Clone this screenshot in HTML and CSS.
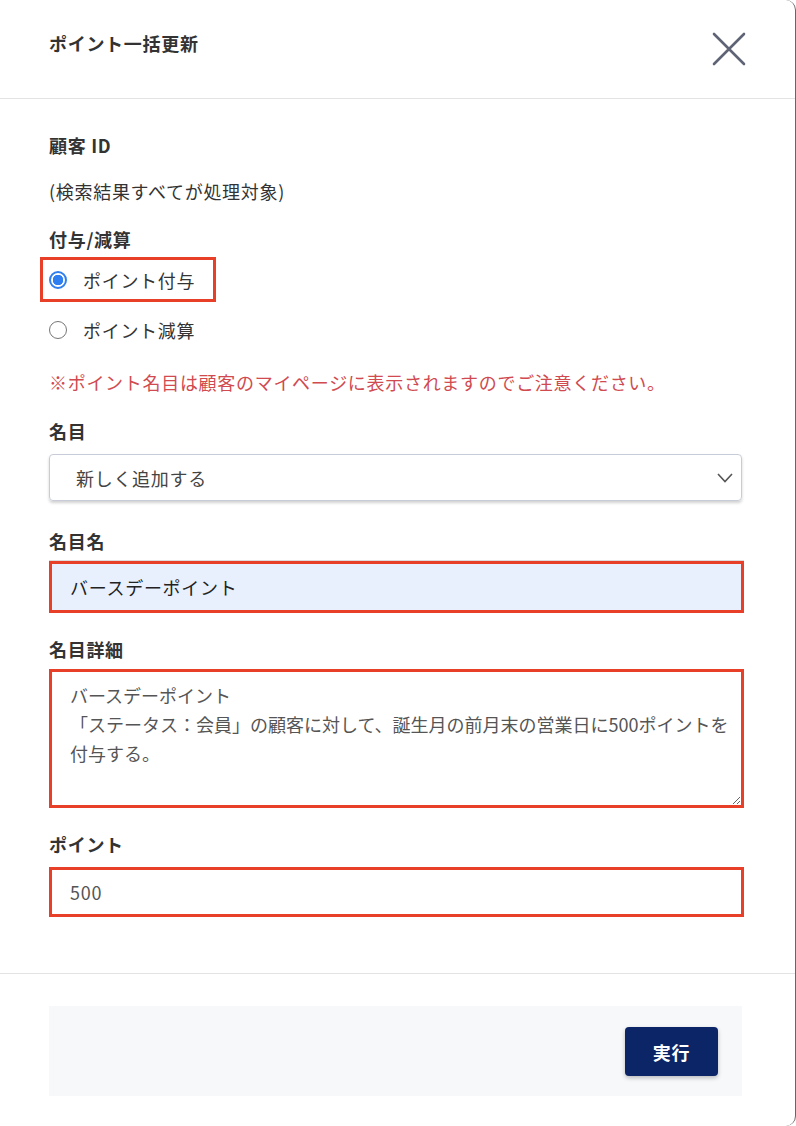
FILE: index.html
```html
<!DOCTYPE html>
<html lang="ja">
<head>
    <meta charset="UTF-8">
    <meta name="viewport" content="width=device-width, initial-scale=1.0">
    <title>ポイント一括更新</title>
    <link rel="stylesheet" href="styles.css">
</head>
<body>
    <div class="modal">
        <div class="modal-header">
            <h1 class="modal-title">ポイント一括更新</h1>
            <button class="close" type="button" aria-label="閉じる">
                <svg width="34" height="34" viewBox="0 0 34 34">
                    <path d="M2 2 L32 32 M32 2 L2 32" stroke="#5f6376" stroke-width="2.6" stroke-linecap="round" fill="none"/>
                </svg>
            </button>
        </div>

        <div class="modal-body">
            <div class="label">顧客 ID</div>
            <div class="text">(検索結果すべてが処理対象)</div>

            <div class="label label-radio">付与/減算</div>
            <label class="radio-row marked">
                <input type="radio" name="kind" checked>
                <span>ポイント付与</span>
            </label>
            <label class="radio-row second">
                <input type="radio" name="kind">
                <span>ポイント減算</span>
            </label>

            <p class="notice">※ポイント名目は顧客のマイページに表示されますのでご注意ください。</p>

            <div class="label">名目</div>
            <div class="select">
                <span>新しく追加する</span>
                <svg width="16" height="10" viewBox="0 0 16 10">
                    <path d="M1 1 L8 8.5 L15 1" stroke="#555" stroke-width="1.6" fill="none"/>
                </svg>
            </div>

            <div class="label label-name">名目名</div>
            <input class="field field-name marked" type="text" value="バースデーポイント">

            <div class="label label-detail">名目詳細</div>
            <textarea class="field field-detail marked">バースデーポイント
「ステータス：会員」の顧客に対して、誕生月の前月末の営業日に500ポイントを付与する。</textarea>

            <div class="label label-point">ポイント</div>
            <input class="field field-point marked" type="text" value="500">
        </div>

        <div class="modal-footer">
            <div class="footer-box">
                <button class="submit" type="button">実行</button>
            </div>
        </div>
    </div>
</body>
</html>
```

FILE: styles.css
```css
*{
    margin: 0;
    padding: 0;
    box-sizing: border-box;
}
body{
    font-family: "Noto Sans CJK JP", "Noto Sans", sans-serif;
    font-size: 18px;
    letter-spacing: 0.7px;
    color: #333;
    background-color: white;
}
.modal{
    width: 796px;
    min-height: 1126px;
    border-right: 1px solid #666;
    border-radius: 0 10px 10px 0;
    background-color: white;
}
.modal-header{
    height: 99px;
    padding: 28px 50px 0 49px;
    display: flex;
    justify-content: space-between;
    align-items: flex-start;
    border-bottom: 1px solid #e3e3e3;
}
.modal-title{
    font-size: 18px;
    font-weight: 700;
    line-height: 30px;
    color: #333;
}
.close{
    background: none;
    border: none;
    margin-top: 4px;
    margin-right: -1px;
    width: 34px;
    height: 34px;
}
.modal-body{
    padding: 31px 51px 56px 49px;
}
.label{
    font-weight: 700;
    line-height: 30px;
    color: #333;
}
.text{
    margin-top: 16px;
    line-height: 30px;
    color: #333;
}
.label-radio{
    margin-top: 18px;
}
.radio-row{
    display: flex;
    align-items: center;
    gap: 16px;
    height: 45px;
    line-height: 30px;
    color: #333;
    width: 176px;
    margin-left: -9px;
    padding-left: 6px;
}
.radio-row.marked{
    margin-top: 3px;
    border: 3px solid #e84028;
}
.radio-row.second{
    margin-top: 5px;
    padding-left: 9px;
}
.radio-row input{
    appearance: none;
    width: 18px;
    height: 18px;
    border-radius: 50%;
    border: 1.5px solid #767676;
    background-color: white;
    flex-shrink: 0;
}
.radio-row input:checked{
    border: 2px solid #2f7ff0;
    background: radial-gradient(circle, #2f7ff0 0 5px, white 5.5px);
}
.notice{
    margin-top: 15px;
    line-height: 30px;
    color: #d04a4f;
}
.notice + .label{
    margin-top: 19px;
}
.select{
    margin-top: 8px;
    height: 47px;
    width: calc(100% - 2px);
    border: 1px solid #c8ccd8;
    border-radius: 4px;
    box-shadow: 0 2px 3px rgba(0, 0, 0, 0.18);
    display: flex;
    justify-content: space-between;
    align-items: center;
    padding: 0 8px 0 26px;
    color: #444;
}
.label-name{
    margin-top: 25px;
}
.field{
    display: block;
    width: 100%;
    font-family: inherit;
    font-size: 18px;
    letter-spacing: 0.7px;
    border: 3px solid #e84028;
    outline: none;
    background-color: white;
}
.field-name{
    margin-top: 5px;
    height: 52px;
    padding: 0 18px;
    background-color: #e8f0fe;
    color: #222;
    box-shadow: 0 -1px 0 #ddd;
}
.label-detail{
    margin-top: 21px;
}
.field-detail{
    margin-top: 5px;
    height: 139px;
    padding: 9px 2px 0 18px;
    line-height: 29px;
    letter-spacing: 0;
    color: #555;
    resize: vertical;
}
.label-point{
    margin-top: 21px;
}
.field-point{
    margin-top: 8px;
    height: 50px;
    padding: 0 18px;
    color: #555;
}
.modal-footer{
    border-top: 1px solid #e3e3e3;
    padding: 32px 53px 30px 49px;
}
.footer-box{
    background-color: #f7f8fa;
    height: 90px;
    display: flex;
    justify-content: flex-end;
    align-items: flex-start;
    padding: 21px 24px 0 0;
}
.submit{
    width: 93px;
    height: 49px;
    background-color: #0c2566;
    color: white;
    border: none;
    border-radius: 4px;
    font-family: inherit;
    font-size: 18px;
    font-weight: 700;
    letter-spacing: 0.7px;
    box-shadow: 0 2px 4px rgba(0, 0, 0, 0.25);
}
```
